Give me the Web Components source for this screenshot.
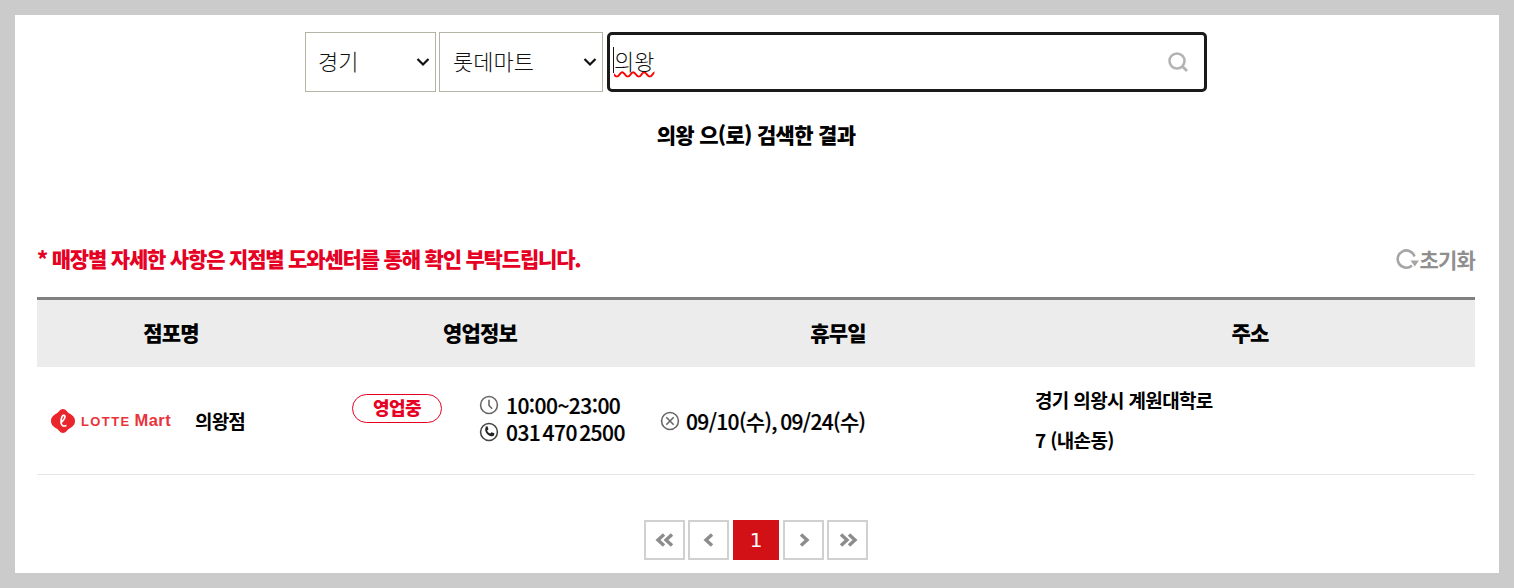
<!DOCTYPE html>
<html lang="ko">
<head>
<meta charset="utf-8">
<title>매장 찾기</title>
<style>
  html, body { margin: 0; padding: 0; background: #cbcbcb; }
  body { padding: 15px; height: 558px; overflow: hidden; font-family: "Noto Sans CJK KR", sans-serif; }
</style>
</head>
<body>
<store-finder>
  <store-search slot="search" region="경기" brand="롯데마트" keyword="의왕"></store-search>
  <store-table slot="table">
    <store-row name="의왕점" status="영업중" hours="10:00~23:00" phone="031 470 2500" closed="09/10(수), 09/24(수)">
      <span>경기 의왕시 계원대학로</span><span>7 (내손동)</span>
    </store-row>
  </store-table>
  <store-pager slot="pager" current="1"></store-pager>
</store-finder>

<script>
const FONT = `"Noto Sans CJK KR", sans-serif`;

class StoreFinder extends HTMLElement {
  constructor() {
    super();
    this.attachShadow({ mode: "open" });
    this.shadowRoot.innerHTML = `
<style>
  :host { display: block; background: #fff; height: 558px; padding: 17px 24px 0 22px; box-sizing: border-box; font-family: ${FONT}; color: #000; }
  h2 { margin: 0; height: 30px; padding-top: 27px; box-sizing: content-box; text-align: center; font-size: 21px; line-height: 30px; font-weight: 900; letter-spacing: -.7px; }
  .bar { display: flex; justify-content: space-between; align-items: center; margin-top: 95px; height: 30px; }
  .note { color: #e60023; font-size: 21px; font-weight: 900; letter-spacing: -1.18px; line-height: 30px; margin-bottom: 2px; }
  .reset { display: flex; align-items: center; gap: 0; color: #8f8f8f; font-size: 21px; font-weight: 700; letter-spacing: -.8px; line-height: 30px; }
  .reset svg { width: 24px; height: 24px; }
  .table { margin-top: 23px; }
  .pager { margin-top: 45px; }
</style>
<slot name="search"></slot>
<h2>의왕 으(로) 검색한 결과</h2>
<div class="bar">
  <div class="note">* 매장별 자세한 사항은 지점별 도와센터를 통해 확인 부탁드립니다.</div>
  <div class="reset">
    <svg viewBox="0 0 24 24" fill="none"><path d="M19.500 9.500A8.600 8.600 0 1 0 17 18.500" stroke="#a6a6a6" stroke-width="2.600"/><path d="M15.500 13.500h8.500l-4.200 6z" fill="#a6a6a6"/></svg>
    <span>초기화</span>
  </div>
</div>
<div class="table"><slot name="table"></slot></div>
<div class="pager"><slot name="pager"></slot></div>`;
  }
}

class StoreSearch extends HTMLElement {
  constructor() {
    super();
    this.attachShadow({ mode: "open" });
    const chevron = `<svg viewBox="0 0 14 10" fill="none"><path d="M1.500 2l5.500 5.500L12.500 2" stroke="#111" stroke-width="2.200"/></svg>`;
    this.shadowRoot.innerHTML = `
<style>
  :host { display: flex; justify-content: center; gap: 3px; height: 60px; font-family: ${FONT}; }
  .sel { box-sizing: border-box; height: 60px; border: 1px solid #b5b3a4; display: flex; align-items: center; justify-content: space-between; font-size: 22px; font-weight: 300; color: #111; }
  .sel span { margin-top: -5px; }
  .sel svg { width: 14px; height: 10px; margin-right: 5px; }
  .region { width: 131px; padding-left: 12px; }
  .brand { width: 164px; padding-left: 13px; }
  .input { box-sizing: border-box; width: 600px; height: 60px; margin-left: 1px; border: 3px solid #1a1a1a; border-radius: 5px; display: flex; align-items: center; justify-content: space-between; padding: 0 15px 0 3px; font-size: 22px; font-weight: 300; color: #111; }
  .input span { margin-top: -5px; text-decoration: underline wavy #f00 1.500px; text-underline-offset: 1px; border-left: 1px solid #111; line-height: 26px; }
  .input svg { width: 22px; height: 22px; }
</style>
<div class="sel region"><span>${this.getAttribute("region")}</span>${chevron}</div>
<div class="sel brand"><span>${this.getAttribute("brand")}</span>${chevron}</div>
<div class="input"><span>${this.getAttribute("keyword")}</span>
  <svg viewBox="0 0 22 22" fill="none" stroke="#b3b3b3"><circle cx="10" cy="10" r="7.500" stroke-width="2.600"/><path d="M15.500 15.500l4.500 4.500" stroke-width="2.800"/></svg>
</div>`;
  }
}

class StoreTable extends HTMLElement {
  constructor() {
    super();
    this.attachShadow({ mode: "open" });
    this.shadowRoot.innerHTML = `
<style>
  :host { display: block; font-family: ${FONT}; }
  .head { display: grid; grid-template-columns: 268px 350px 366px 454px; height: 64px; padding-bottom: 3px; align-items: center; background: #ececec; border-top: 3px solid #808080; text-align: center; font-size: 21px; font-weight: 900; letter-spacing: -.8px; }
  .head div:last-child { padding-left: 4px; }
</style>
<div class="head"><div>점포명</div><div>영업정보</div><div>휴무일</div><div>주소</div></div>
<slot></slot>`;
  }
}

class StoreRow extends HTMLElement {
  constructor() {
    super();
    this.attachShadow({ mode: "open" });
    const a = (n) => this.getAttribute(n);
    this.shadowRoot.innerHTML = `
<style>
  :host { display: grid; grid-template-columns: 268px 350px 370px 450px; height: 108px; align-items: center; border-bottom: 1px solid #e6e6e6; box-sizing: border-box; font-family: ${FONT}; font-size: 21px; font-weight: 500; letter-spacing: -.6px; color: #000; }
  .shop { display: flex; align-items: center; padding-left: 14px; }
  .logo { width: 121px; height: 24px; display: flex; align-items: center; gap: 6px; margin-right: 23px; }
  .logo svg { width: 24px; height: 24px; flex: none; }
  .logo b { font-family: "Liberation Sans", sans-serif; font-size: 16.500px; line-height: 24px; color: #e8343a; letter-spacing: .4px; white-space: nowrap; }
  .logo b i { font-style: normal; font-size: 13px; letter-spacing: 1.400px; margin-right: 4px; }
  .name { font-size: 19px; font-weight: 700; letter-spacing: -.85px; }
  .info { display: flex; align-items: flex-start; height: 54px; }
  .pill { box-sizing: border-box; width: 90px; height: 29px; margin: 0 37px 0 47px; border: 1px solid #e60023; border-radius: 15px; color: #e60023; font-size: 18px; font-weight: 900; line-height: 24px; text-align: center; letter-spacing: -.6px; }
  .lines { display: flex; flex-direction: column; margin-top: -2px; }
  .line { display: flex; align-items: center; gap: 7px; height: 27px; line-height: 27px; white-space: nowrap; letter-spacing: -.55px; word-spacing: -3px; -webkit-text-stroke: .2px #000; }
  .line svg { width: 20px; height: 20px; flex: none; }
  .off { display: flex; align-items: center; gap: 6px; padding-left: 5px; white-space: nowrap; letter-spacing: -.64px; word-spacing: -2px; -webkit-text-stroke: .2px #000; }
  .off svg { width: 20px; height: 20px; flex: none; }
  .addr { padding-left: 10px; font-size: 19px; font-weight: 700; letter-spacing: -.65px; margin-top: -2px; }
  ::slotted(span) { display: block; line-height: 40px; }
</style>
<div class="shop">
  <div class="logo">
    <svg viewBox="0 0 24 24"><path d="M12 0C15 0 16 3 18.500 4.500C21 6 24 8 24 12C24 16 21 18 18.500 19.500C16 21 15 24 12 24C9 24 8 21 5.500 19.500C3 18 0 16 0 12C0 8 3 6 5.500 4.500C8 3 9 0 12 0Z" fill="#e8262c"/><path d="M9.500 14.500C12.500 11.500 15 8 13.500 6.500C12 5.500 10 8 10 12.500C10 16 11.500 18 15.500 16.500" fill="none" stroke="#fff" stroke-width="1.700"/></svg>
    <b><i>LOTTE</i>Mart</b>
  </div>
  <span class="name">${a("name")}</span>
</div>
<div class="info">
  <div class="pill">${a("status")}</div>
  <div class="lines">
    <div class="line"><svg viewBox="0 0 19 19" fill="none" stroke="#666"><circle cx="9.500" cy="9.500" r="8" stroke-width="1.500"/><path d="M9.500 4.500v5.500l3 3" stroke-width="1.500"/></svg><span>${a("hours")}</span></div>
    <div class="line"><svg viewBox="0 0 19 19" fill="none"><circle cx="9.500" cy="9.500" r="8" stroke="#444" stroke-width="1.500"/><path d="M6 4.500L8 4l1 3-1.300 1c.6 1.500 1.500 2.400 3 3l1-1.300 3 1-.5 2c-.5 1-2 1.200-3.700.5-2.500-1-4-3-4.500-5-.3-1.300 0-2.500.5-2.700z" fill="#222"/></svg><span>${a("phone")}</span></div>
  </div>
</div>
<div class="off">
  <svg viewBox="0 0 19 19" fill="none" stroke="#666" stroke-width="1.500"><circle cx="9.500" cy="9.500" r="8"/><path d="M6 6l7 7M13 6l-7 7"/></svg>
  <span>${a("closed")}</span>
</div>
<div class="addr"><slot></slot></div>`;
  }
}

class StorePager extends HTMLElement {
  constructor() {
    super();
    this.attachShadow({ mode: "open" });
    const arrow = (d) => `<svg viewBox="0 0 24 16" fill="none" stroke="#8c8c8c" stroke-width="3.400"><path d="${d}"/></svg>`;
    this.shadowRoot.innerHTML = `
<style>
  :host { display: flex; justify-content: center; gap: 3px; font-family: "Liberation Sans", sans-serif; }
  a { box-sizing: border-box; width: 41px; height: 40px; border: 2px solid #d0d0d0; display: flex; align-items: center; justify-content: center; }
  a svg { width: 24px; height: 16px; }
  a.on { width: 46px; margin: 0 1px; background: #d21117; border: 0; color: #fff; font: 20px "DejaVu Sans", sans-serif; }
</style>
<a>${arrow("M11 2.500L5 8l6 5.500M19 2.500L13 8l6 5.500")}</a>
<a>${arrow("M15 2.500L9 8l6 5.500")}</a>
<a class="on">${this.getAttribute("current")}</a>
<a>${arrow("M9 2.500L15 8l-6 5.500")}</a>
<a>${arrow("M5 2.500L11 8l-6 5.500M13 2.500L19 8l-6 5.500")}</a>`;
  }
}

customElements.define("store-finder", StoreFinder);
customElements.define("store-search", StoreSearch);
customElements.define("store-table", StoreTable);
customElements.define("store-row", StoreRow);
customElements.define("store-pager", StorePager);
</script>
</body>
</html>
